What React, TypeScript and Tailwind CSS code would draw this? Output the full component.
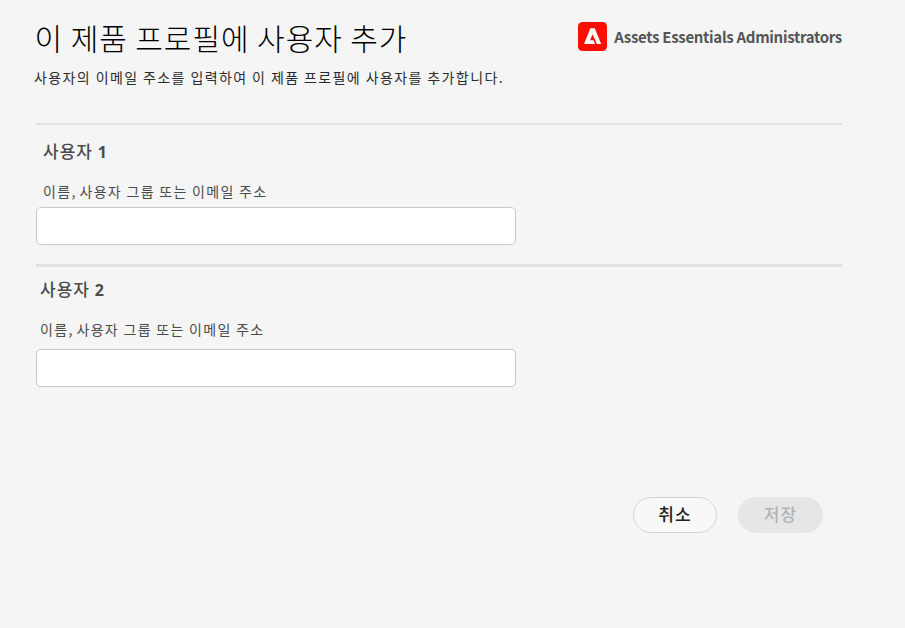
type UserFieldsProps = { title: string; first?: boolean };

function UserFields({ title, first = false }: UserFieldsProps) {
  return (
    <section className={first ? "h-[141px] w-[806px] border-t-2 border-[#e1e1e1]" : "h-[123px] w-[806px] border-t-[3px] border-[#e1e1e1]"}>
      <h2 className={first ? "ml-[7px] mt-[14px] h-6 text-[17px] font-medium leading-6 tracking-[1px]" : "ml-1 mt-[10px] h-6 text-[17px] font-medium leading-6 tracking-[1px]"}>
        사용자 <span className="font-['Noto_Sans'] text-[16px] font-bold">{title}</span>
      </h2>
      <label className={first ? "ml-[7px] mt-[18px] block h-5 text-[14px] leading-5 tracking-[1.3px]" : "ml-1 mt-[18px] block h-5 text-[14px] leading-5 tracking-[1.3px]"}>
        이름<span className="tracking-[-0.2px]">,</span> 사용자 그룹 또는 이메일 주소
      </label>
      <input
        aria-label={`사용자 ${title}`}
        className={first ? "mt-[6px] block h-[38px] w-[480px] rounded-[5px] border border-[#c8c8c8] bg-white px-3" : "mt-[10px] block h-[38px] w-[480px] rounded-[5px] border border-[#c8c8c8] bg-white px-3"}
      />
    </section>
  );
}

export default function App() {
  return (
    <div className="h-[628px] w-[905px] overflow-hidden bg-[#f5f5f5] font-['Noto_Sans_CJK_KR',sans-serif] text-[#4b4b4b]">
      <header className="flex h-[123px] justify-between pl-[34px] pr-[63px] pt-[16px]">
        <div>
          <h1 className="ml-[0.5px] h-[42px] whitespace-nowrap text-[30px] font-light leading-[42px] tracking-[0.95px] text-black">이 제품 프로필에 사용자 추가</h1>
          <p className="mt-[9px] whitespace-nowrap text-[14px] leading-[20px] tracking-[1.4px] text-[#2c2c2c]">사용자의 이메일 주소를 입력하여 이 제품 프로필에 사용자를 추가합니다.</p>
        </div>
        <div className="mt-[6px] flex h-[29px] items-center gap-[7px]">
          <svg width="29" height="29" viewBox="0 0 29 29">
            <rect width="29" height="29" rx="4.5" fill="#fa0f00" />
            <path d="M12.4 6.3h4.4L23.2 22h-3.8a.9.9 0 0 1-.8-.5L14.6 12.2 12 18.3h3.1a.5.5 0 0 1 .5.3L17 22H6z" fill="#fff" />
          </svg>
          <span className="whitespace-nowrap text-[15px] font-bold leading-6 tracking-[-0.31px] text-[#555]">Assets Essentials Administrators</span>
        </div>
      </header>
      <main className="ml-9">
        <UserFields title="1" first />
        <UserFields title="2" />
      </main>
      <div className="mr-[35px] mt-[8px] flex justify-end">
        <div aria-hidden="true" className="flex h-[36px] w-[105px] items-center justify-center rounded-full bg-[#f4f4f4] text-[15px] font-bold text-[#f6f6f6]">Add User</div>
      </div>
      <footer className="mr-[82px] mt-[66px] flex justify-end gap-[21px]">
        <button className="h-9 w-[84px] rounded-full border border-[#d3d3d3] bg-[#f8f8f8] pb-[2px] text-[17px] font-medium leading-[32px] tracking-[1px] text-[#222]">취소</button>
        <button disabled className="h-9 w-[85px] rounded-full bg-[#e6e6e6] pb-[2px] text-[17px] font-medium leading-[34px] tracking-[1px] text-[#b3b3b3]">저장</button>
      </footer>
    </div>
  );
}
